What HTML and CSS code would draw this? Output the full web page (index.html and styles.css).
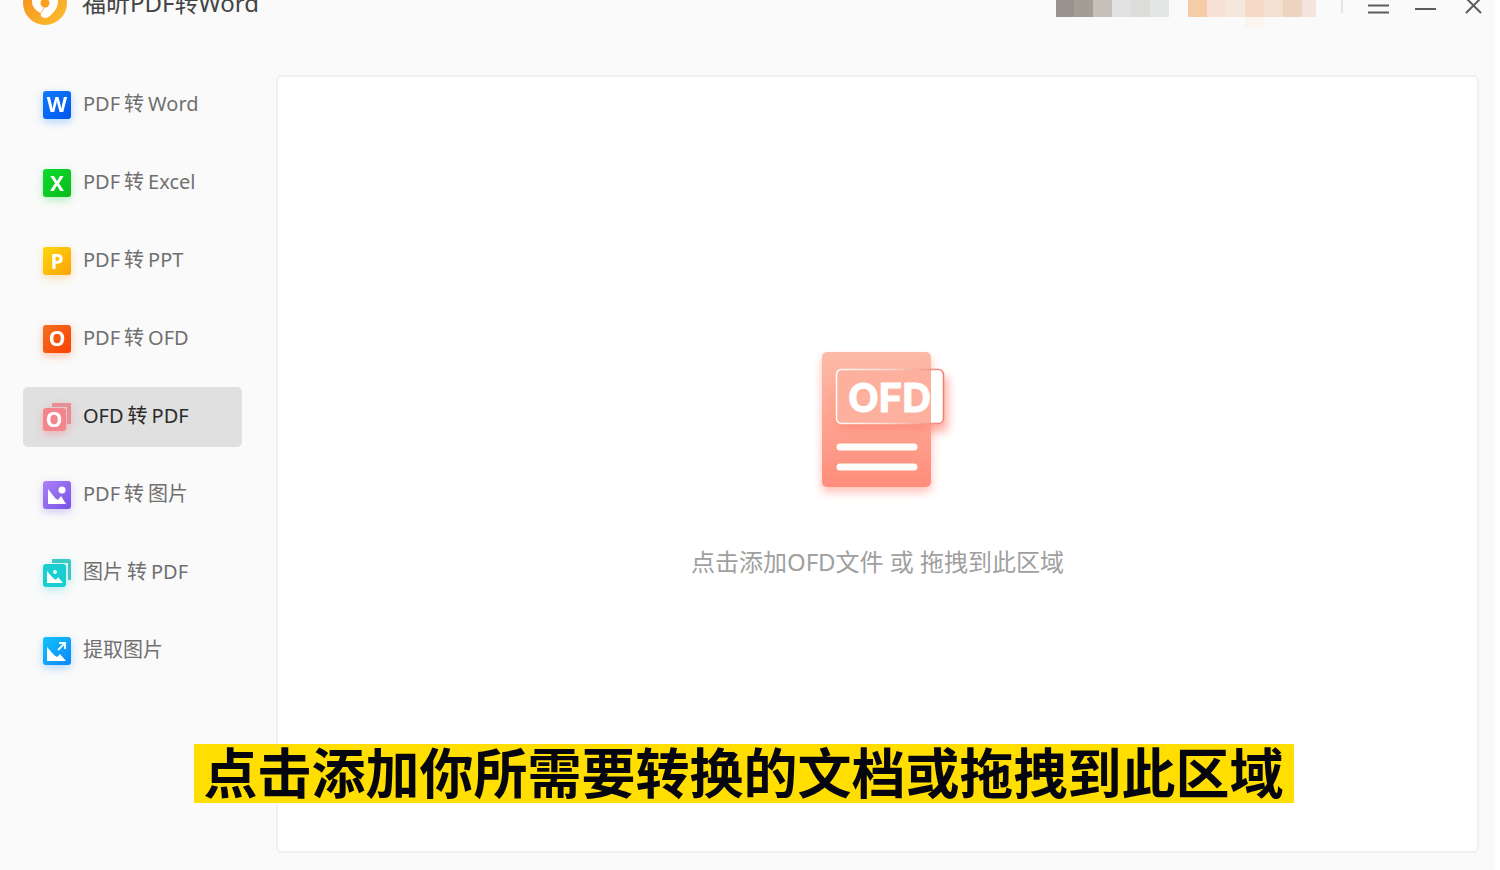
FILE: index.html
```html
<!DOCTYPE html>
<html lang="zh-CN">
<head>
    <meta charset="UTF-8">
    <meta name="viewport" content="width=device-width, initial-scale=1.0">
    <title>福昕PDF转Word</title>
    <link rel="stylesheet" href="styles.css">
</head>
<body>
    <div class="app">
        <header class="titlebar">
            <svg class="logo" viewBox="0 0 44 44" aria-hidden="true">
                <defs>
                    <linearGradient id="g-logo" x1="0" y1="0" x2="1" y2="1">
                        <stop offset="0" stop-color="#f58a1f"/>
                        <stop offset="1" stop-color="#fbc02d"/>
                    </linearGradient>
                </defs>
                <circle cx="22" cy="22" r="22" fill="url(#g-logo)"/>
                <path d="M9 20a13 13 0 0 1 26 0c0 6-3 10-7 14-2 2-4 3-6 3-3 0-5-2-4-5-5-2-9-6-9-12z" fill="#fff"/>
                <circle cx="22" cy="22" r="4.5" fill="#f9a11f"/>
                <path d="M22 26l-4 6" stroke="#f9b04a" stroke-width="1"/>
            </svg>
            <h1 class="title">福昕PDF转Word</h1>
            <div class="controls">
                <svg class="account" viewBox="0 0 260 48" shape-rendering="crispEdges" aria-hidden="true">
                    <path fill="#97928c" d="M0 0h18v36H0z"/>
                    <path fill="#a29e96" d="M18 0h19v36H18z"/>
                    <path fill="#c5c1b9" d="M37 0h19v36H37z"/>
                    <path fill="#e1e1e1" d="M56 0h19v36H56z"/>
                    <path fill="#dcdcda" d="M75 0h19v36H75z"/>
                    <path fill="#e4e6e5" d="M94 0h19v36H94z"/>
                    <path fill="#f5cba8" d="M132 0h19v36h-19z"/>
                    <path fill="#f8e1d4" d="M151 0h19v36h-19z"/>
                    <path fill="#f6e7dd" d="M170 0h19v36h-19z"/>
                    <path fill="#f5dac8" d="M189 0h19v36h-19z"/>
                    <path fill="#f3e0d0" d="M208 0h19v36h-19z"/>
                    <path fill="#eed3c0" d="M227 0h19v36h-19z"/>
                    <path fill="#f4e4dd" d="M246 0h14v36h-14z"/>
                    <path fill="#fbf5f1" d="M189 36h19v12h-19z"/>
                </svg>
                <span class="divider"></span>
                <button class="control" type="button" aria-label="菜单">
                    <svg viewBox="0 0 22 44"><path d="M0 24.5h21M0 31.5h21"/></svg>
                </button>
                <button class="control" type="button" aria-label="最小化">
                    <svg viewBox="0 0 22 44"><path d="M0 28h21"/></svg>
                </button>
                <button class="control" type="button" aria-label="关闭">
                    <svg viewBox="0 0 22 44"><path d="M4 17l15 15M19 17L4 32"/></svg>
                </button>
            </div>
        </header>

        <main class="content">
            <nav class="sidebar">
                <button class="item" type="button">
                    <svg class="icon blue" viewBox="0 0 28 28" aria-hidden="true">
                        <defs><linearGradient id="g-word" x2="1" y2="1"><stop stop-color="#0a7cf8"/><stop offset="1" stop-color="#0556ee"/></linearGradient></defs>
                        <rect width="28" height="28" rx="3" fill="url(#g-word)"/>
                        <text x="14" y="21">W</text>
                    </svg>
                    <span class="label">PDF<span class="to">转</span>Word</span>
                </button>
                <button class="item" type="button">
                    <svg class="icon green" viewBox="0 0 28 28" aria-hidden="true">
                        <defs><linearGradient id="g-excel" x2="1" y2="1"><stop stop-color="#0ddc2b"/><stop offset="1" stop-color="#0cb91c"/></linearGradient></defs>
                        <rect width="28" height="28" rx="3" fill="url(#g-excel)"/>
                        <text x="14" y="22">X</text>
                    </svg>
                    <span class="label">PDF<span class="to">转</span>Excel</span>
                </button>
                <button class="item" type="button">
                    <svg class="icon yellow" viewBox="0 0 28 28" aria-hidden="true">
                        <defs><linearGradient id="g-ppt" x2="1" y2="1"><stop stop-color="#fcd80b"/><stop offset="1" stop-color="#fda208"/></linearGradient></defs>
                        <rect width="28" height="28" rx="3" fill="url(#g-ppt)"/>
                        <text x="14" y="22">P</text>
                    </svg>
                    <span class="label">PDF<span class="to">转</span>PPT</span>
                </button>
                <button class="item" type="button">
                    <svg class="icon orange" viewBox="0 0 28 28" aria-hidden="true">
                        <defs><linearGradient id="g-ofd" x2="1" y2="1"><stop stop-color="#f2701f"/><stop offset="1" stop-color="#fb4203"/></linearGradient></defs>
                        <rect width="28" height="28" rx="3" fill="url(#g-ofd)"/>
                        <text x="14" y="21">O</text>
                    </svg>
                    <span class="label">PDF<span class="to">转</span>OFD</span>
                </button>
                <button class="item active" type="button">
                    <svg class="icon pink" viewBox="0 0 28 28" aria-hidden="true">
                        <path d="M9 0h19v21h-4V4H9z" fill="#e78f96"/>
                        <rect y="5" width="23" height="23" rx="3" fill="#f5858d"/>
                        <text x="11" y="24">O</text>
                    </svg>
                    <span class="label">OFD<span class="to">转</span>PDF</span>
                </button>
                <button class="item" type="button">
                    <svg class="icon purple" viewBox="0 0 28 28" aria-hidden="true">
                        <defs><linearGradient id="g-image" x2="1" y2="1"><stop stop-color="#ad82f6"/><stop offset="1" stop-color="#7553e6"/></linearGradient></defs>
                        <rect width="28" height="28" rx="3" fill="url(#g-image)"/>
                        <path d="M5 8l7 9 3 2 3-4 5 8H5z" fill="#fff"/>
                        <circle cx="19" cy="9" r="3.5" fill="#fff"/>
                    </svg>
                    <span class="label">PDF<span class="to">转</span>图片</span>
                </button>
                <button class="item" type="button">
                    <svg class="icon teal" viewBox="0 0 28 28" aria-hidden="true">
                        <path d="M9 0h17q2 0 2 2v19h-3V4H9z" fill="#3cc9c6"/>
                        <rect y="5" width="23" height="23" rx="3" fill="#19cdd0"/>
                        <path d="M4 12l6 7 3 2 2-3 5 6H4z" fill="#fff"/>
                        <circle cx="12" cy="13" r="2" fill="#e4fbfa"/>
                    </svg>
                    <span class="label">图片<span class="to">转</span>PDF</span>
                </button>
                <button class="item" type="button">
                    <svg class="icon sky" viewBox="0 0 28 28" aria-hidden="true">
                        <defs><linearGradient id="g-extract" x2="1" y2="1"><stop stop-color="#12c4fb"/><stop offset="1" stop-color="#0d86f8"/></linearGradient></defs>
                        <rect width="28" height="28" rx="3" fill="url(#g-extract)"/>
                        <path d="M4 10l7 8 3 2 3-3 6 7H4z" fill="#fff"/>
                        <path d="M15 13l7-7M16 6h6v6" fill="none" stroke="#e9f9ff" stroke-width="2"/>
                    </svg>
                    <span class="label">提取图片</span>
                </button>
            </nav>

            <button class="dropzone" type="button">
                <svg class="ofd-file" viewBox="0 0 160 160" aria-hidden="true">
                    <defs>
                        <linearGradient id="g-file" x2="0" y2="1">
                            <stop stop-color="#fcbba7"/>
                            <stop offset="1" stop-color="#ff8d7c"/>
                        </linearGradient>
                        <linearGradient id="g-edge">
                            <stop stop-color="#fff"/>
                            <stop offset="0.5" stop-color="#fbd8d0"/>
                            <stop offset="1" stop-color="#f0806f"/>
                        </linearGradient>
                        <filter id="blur" x="-20%" y="-40%" width="140%" height="180%">
                            <feGaussianBlur stdDeviation="5"/>
                        </filter>
                    </defs>
                    <rect x="24" y="18" width="109" height="134" rx="4" fill="#ff8d7c" opacity="0.55" filter="url(#blur)"/>
                    <rect x="98" y="36" width="52" height="56" rx="5" fill="#ff7d68" opacity="0.6" filter="url(#blur)"/>
                    <rect x="24" y="12" width="109" height="135" rx="5" fill="url(#g-file)"/>
                    <rect x="40" y="40" width="92" height="48" rx="5" fill="#fb705c" opacity="0.45" filter="url(#blur)"/>
                    <rect x="38" y="29" width="108" height="55" rx="5" fill="#fdb09e"/>
                    <path d="M133 29h8q5 0 5 5v45q0 5-5 5h-8z" fill="#fff"/>
                    <rect x="38.5" y="29.5" width="107" height="54" rx="5" fill="none" stroke="url(#g-edge)" stroke-width="1.5"/>
                    <text x="50" y="72">OFD</text>
                    <path d="M42 107h74M42 127h74" stroke="#fffdf9" stroke-width="7" stroke-linecap="round"/>
                </svg>
                <span class="hint">点击添加OFD文件 或 拖拽到此区域</span>
            </button>
        </main>

        <div class="caption"><p>点击添加你所需要转换的文档或拖拽到此区域</p></div>
    </div>
</body>
</html>
```
FILE: styles.css
```css
body {
    margin: 0;
    background-color: white;
    font-family: "Noto Sans", "Noto Sans CJK SC", sans-serif;
    overflow: hidden;
}
button {
    border: none;
    padding: 0;
    background: none;
    font-family: inherit;
    cursor: pointer;
}
.app {
    position: relative;
    display: flex;
    flex-direction: column;
    height: 100vh;
    margin-right: 5px;
    background-color: #fafafa;
}

/* title bar, its upper part runs off the top edge */
.titlebar {
    display: flex;
    align-items: flex-start;
    height: 94px;
    margin-top: -19px;
    padding: 0 11px 0 23px;
}
.logo {
    width: 44px;
    height: 44px;
}
.title {
    margin: 0 0 0 15px;
    font-size: 24px;
    font-weight: normal;
    line-height: 44px;
    color: #444;
}
.controls {
    display: flex;
    gap: 25px;
    margin-left: auto;
}
.account {
    width: 260px;
    height: 48px;
}
.divider {
    width: 2px;
    height: 32px;
    background-color: #e4e4e4;
}
.control {
    width: 22px;
    height: 44px;
}
.control svg {
    display: block;
    fill: none;
    stroke: #5c5c5c;
    stroke-width: 2;
}

.content {
    display: flex;
    flex: 1;
    gap: 34px;
    padding: 0 16px 17px 23px;
}
.sidebar {
    display: flex;
    flex-direction: column;
    gap: 18px;
    width: 219px;
}
.item {
    display: flex;
    align-items: center;
    gap: 12px;
    height: 60px;
    padding: 0 20px;
    border-radius: 5px;
    font-size: 20px;
    color: #707070;
}
.item:hover {
    background-color: #eee;
}
.item.active {
    background-color: #e0e0e0;
    color: #2b2b2b;
}
.label {
    padding-bottom: 2px;
    line-height: 28px;
}
.to {
    margin: 0 4px;
}
.icon {
    width: 28px;
    height: 28px;
    overflow: visible;
}
.icon text {
    fill: #fff;
    font-size: 21px;
    font-weight: bold;
    text-anchor: middle;
}
.blue { filter: drop-shadow(0 3px 4px #0a7cf84d); }
.green { filter: drop-shadow(0 3px 4px #0ddc2b4d); }
.yellow { filter: drop-shadow(0 3px 4px #fda2084d); }
.orange { filter: drop-shadow(0 3px 4px #fb42034d); }
.pink { filter: drop-shadow(0 3px 4px #f5858d80); }
.purple { filter: drop-shadow(0 3px 4px #7553e64d); }
.teal { filter: drop-shadow(0 3px 4px #19cdd04d); }
.sky { filter: drop-shadow(0 3px 4px #0d86f84d); }

.dropzone {
    display: flex;
    flex: 1;
    flex-direction: column;
    align-items: center;
    justify-content: center;
    gap: 46px;
    padding-bottom: 10px;
    border: 2px solid #f0f0f0;
    border-radius: 6px;
    background-color: white;
}
.ofd-file {
    width: 160px;
    height: 160px;
    overflow: visible;
}
.ofd-file text {
    fill: #fff;
    stroke: #fff;
    stroke-width: 1;
    stroke-linejoin: round;
    font-family: Inter, sans-serif;
    font-size: 40px;
    font-weight: bold;
}
.hint {
    font-size: 24px;
    line-height: 32px;
    color: #a0a0a0;
}

/* subtitle bar over the window */
.caption {
    position: absolute;
    right: 8px;
    bottom: 67px;
    left: 0;
    display: flex;
    justify-content: center;
    pointer-events: none;
}
.caption p {
    margin: 0;
    padding: 0 10px;
    background-color: #ffde00;
    color: #050510;
    font-size: 54px;
    font-weight: bold;
    line-height: 59px;
    white-space: nowrap;
}
```
